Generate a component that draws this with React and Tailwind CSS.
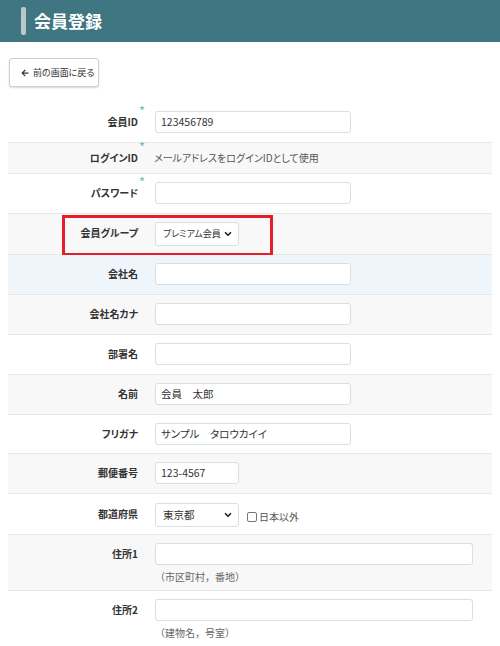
import React from 'react';
import { FaArrowLeft } from 'react-icons/fa';
import { ChevronDown } from 'lucide-react';

const font = { fontFamily: '"Noto Sans CJK JP", "Noto Sans", sans-serif' };

const Label = ({ children, required }) => (
    <div className="w-[140px] shrink-0 whitespace-nowrap pr-[10px] text-right text-[10px] font-bold leading-[22px] text-[#333]">
        <span className="relative">
            {children}
            {required && (
                <span className="absolute -right-[7px] -top-[10px] text-[13px] font-normal leading-[13px] text-[#6dc0b4]">*</span>
            )}
        </span>
    </div>
);

const Row = ({ label, required, bg, h = 'h-[40px]', pt = 'pt-[8px]', children, overlay }) => (
    <div className={`relative box-border flex items-start gap-[7px] border-b border-[#e6e7e9] ${bg} ${h} ${pt}`}>
        <Label required={required}>{label}</Label>
        <div className="flex-1">{children}</div>
        {overlay}
    </div>
);

const Input = ({ value, w = 'w-[196px]' }) => (
    <div className={`${w} box-border h-[22px] whitespace-nowrap rounded-[3px] border border-[#d9dee2] bg-white px-[5px] text-[10.5px] leading-[20px] text-[#333]`}>
        {value}
    </div>
);

const Select = ({ value, size = 'text-[10px]' }) => (
    <div className={`box-border flex h-[24px] w-[84px] items-center justify-between whitespace-nowrap rounded-[3px] border border-[#d9dee2] bg-white pl-[7px] pr-[5px] text-[#333] ${size}`}>
        <span>{value}</span>
        <ChevronDown size={10} strokeWidth={4} className="shrink-0 text-[#222]" />
    </div>
);

const Hint = ({ children }) => (
    <div className="mt-[5px] whitespace-nowrap text-[10px] leading-[14px] text-[#666] [font-feature-settings:normal]">{children}</div>
);

export default function App() {
    return (
        <div className="h-[646px] overflow-hidden bg-white [font-feature-settings:'palt']" style={font}>
            <div className="flex h-[42px] items-center bg-[#3f7681] pl-[21px]">
                <div className="h-[28px] w-[5px] rounded-[2px] bg-[#b9c8cc]" />
                <h1 className="ml-[8px] text-[17px] font-bold text-white">会員登録</h1>
            </div>

            <div className="px-[9px] pt-[16px]">
                <button className="box-border flex h-[29px] w-[90px] items-center gap-[4px] whitespace-nowrap rounded-[3px] border border-[#cfcfcf] bg-white pl-[11px] text-[9px] text-[#333] shadow-[0_1px_2px_rgba(0,0,0,0.15)]">
                    <FaArrowLeft size={8} />
                    <span>前の画面に戻る</span>
                </button>
            </div>

            <div className="mx-[8px] mt-[16px]">
                <Row label="会員ID" required bg="bg-white">
                    <Input value="123456789" />
                </Row>
                <Row label="ログインID" required bg="bg-[#f8f8f9]" h="h-[31px]" pt="pt-[4px]">
                    <div className="-ml-[1px] whitespace-nowrap text-[10px] leading-[22px] text-[#555]">メールアドレスをログインIDとして使用</div>
                </Row>
                <Row label="パスワード" required bg="bg-white">
                    <Input value="" />
                </Row>
                <Row
                    label="会員グループ"
                    bg="bg-[#f8f8f9]"
                    h="h-[41px]"
                    overlay={<div className="absolute left-[54px] top-[1px] h-[41px] w-[211px] border-[3px] border-[#e41e2b]" />}
                >
                    <Select value="プレミアム会員" size="text-[9px]" />
                </Row>
                <Row label="会社名" bg="bg-[#eef6fc]">
                    <Input value="" />
                </Row>
                <Row label="会社名カナ" bg="bg-[#f8f8f9]">
                    <Input value="" />
                </Row>
                <Row label="部署名" bg="bg-white">
                    <Input value="" />
                </Row>
                <Row label="名前" bg="bg-[#f8f8f9]">
                    <Input value="会員　太郎" />
                </Row>
                <Row label="フリガナ" bg="bg-white" h="h-[39px]">
                    <Input value="サンプル　タロウカイイ" />
                </Row>
                <Row label="郵便番号" bg="bg-[#f8f8f9]">
                    <Input value="123-4567" w="w-[84px]" />
                </Row>
                <Row label="都道府県" bg="bg-white" h="h-[41px]" pt="pt-[9px]">
                    <div className="flex items-center">
                        <Select value="東京都" size="text-[10.5px]" />
                        <div className="ml-[8px] mt-[4px] h-[10px] w-[10px] rounded-[2px] border border-[#777] bg-white" />
                        <span className="ml-[2px] mt-[2px] text-[10px] text-[#555]">日本以外</span>
                    </div>
                </Row>
                <Row label="住所1" bg="bg-[#f8f8f9]" h="h-[56px]">
                    <Input value="" w="w-[318px]" />
                    <Hint>（市区町村，番地）</Hint>
                </Row>
                <Row label="住所2" bg="bg-white" h="h-[56px]">
                    <Input value="" w="w-[318px]" />
                    <Hint>（建物名，号室）</Hint>
                </Row>
            </div>
        </div>
    );
}
